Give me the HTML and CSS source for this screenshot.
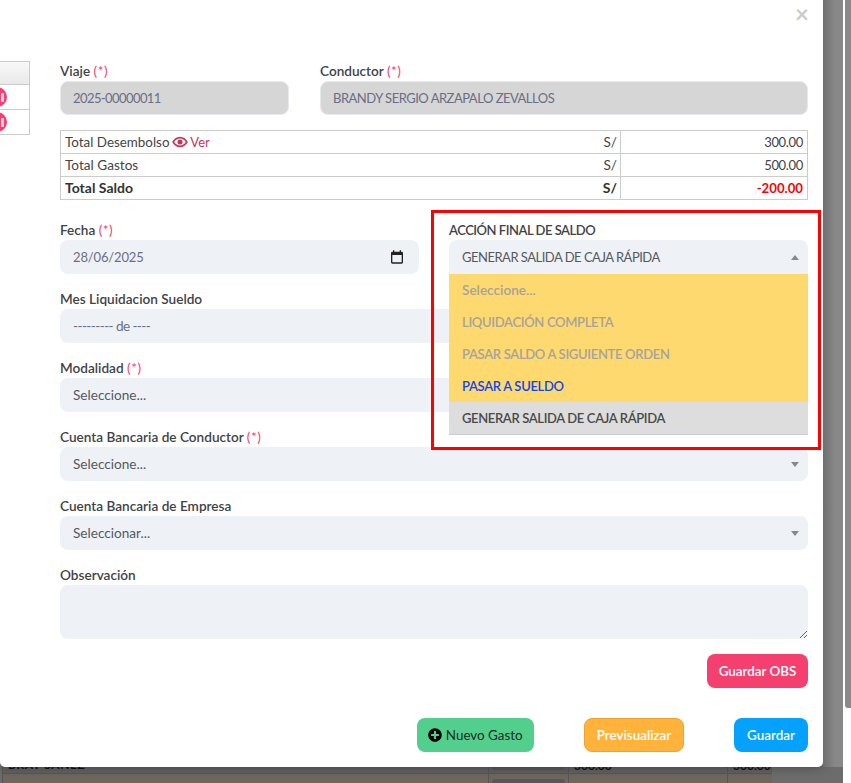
FILE: index.html
```html
<!DOCTYPE html>
<html lang="en">
<head>
    <meta charset="UTF-8">
    <meta name="viewport" content="width=device-width, initial-scale=1.0">
    <title>Liquidacion de Viaje</title>
    <link rel="stylesheet" href="styles.css">
</head>
<body>
    <div class="page">
        <div class="back-table">
            <div class="back-row back-row-gray">
                <div class="back-cell back-name">BRAY SANEZ</div>
                <div class="back-cell back-btn-cell"><span class="back-btn"></span></div>
                <div class="back-cell back-money">300.00</div>
                <div class="back-cell back-money">300.00</div>
            </div>
            <div class="back-row back-row-brown">
                <div class="back-cell"></div>
                <div class="back-cell back-btn-cell"><span class="back-btn"></span></div>
                <div class="back-cell"></div>
                <div class="back-cell"></div>
            </div>
        </div>

        <div class="modal">
            <span class="close">&times;</span>

            <div class="behind-table">
                <div class="behind-head"></div>
                <div class="behind-row"><span class="pill"></span></div>
                <div class="behind-row"><span class="pill"></span></div>
            </div>

            <div class="form">
                <div class="row row-top">
                    <div class="group">
                        <label>Viaje <span class="req">(*)</span></label>
                        <div class="field readonly digits">2025-00000011</div>
                    </div>
                    <div class="group">
                        <label>Conductor <span class="req">(*)</span></label>
                        <div class="field readonly caps">BRANDY SERGIO ARZAPALO ZEVALLOS</div>
                    </div>
                </div>

                <table class="totals">
                    <tr>
                        <td class="desembolso">Total Desembolso
                            <svg class="eye" viewBox="0 0 576 400"><path d="M288 10C165 10 60 90 6 200c54 110 159 190 282 190s228-80 282-190C516 90 411 10 288 10zm0 316c-84 0-160-48-208-126 48-78 124-126 208-126s160 48 208 126c-48 78-124 126-208 126z"/><circle cx="288" cy="200" r="92"/></svg>
                            <span class="ver">Ver</span>
                        </td>
                        <td class="cur">S/</td>
                        <td class="num">300.00</td>
                    </tr>
                    <tr>
                        <td>Total Gastos</td>
                        <td class="cur">S/</td>
                        <td class="num">500.00</td>
                    </tr>
                    <tr class="total">
                        <td>Total Saldo</td>
                        <td class="cur">S/</td>
                        <td class="num neg">-200.00</td>
                    </tr>
                </table>

                <div class="row row-half">
                    <div class="group">
                        <label>Fecha <span class="req">(*)</span></label>
                        <div class="field date">28/06/2025
                            <svg class="calendar" viewBox="0 0 24 24"><path d="M19 4h-1V2h-2v2H8V2H6v2H5a2 2 0 0 0-2 2v14a2 2 0 0 0 2 2h14a2 2 0 0 0 2-2V6a2 2 0 0 0-2-2zm0 16H5V9h14v11z"/></svg>
                        </div>
                    </div>
                    <div class="group">
                        <label class="label-caps">ACCIÓN FINAL DE SALDO</label>
                        <div class="field select open caps">GENERAR SALIDA DE CAJA RÁPIDA<span class="arrow up"></span></div>
                        <ul class="options">
                            <li class="muted first">Seleccione...</li>
                            <li class="muted">LIQUIDACIÓN COMPLETA</li>
                            <li class="muted">PASAR SALDO A SIGUIENTE ORDEN</li>
                            <li class="blue">PASAR A SUELDO</li>
                            <li class="current">GENERAR SALIDA DE CAJA RÁPIDA</li>
                        </ul>
                        <div class="red-box"></div>
                    </div>
                </div>

                <div class="group">
                    <label>Mes Liquidacion Sueldo</label>
                    <div class="field month">--------- de ----</div>
                </div>
                <div class="group">
                    <label>Modalidad <span class="req">(*)</span></label>
                    <div class="field select">Seleccione...<span class="arrow"></span></div>
                </div>
                <div class="group">
                    <label>Cuenta Bancaria de Conductor <span class="req">(*)</span></label>
                    <div class="field select">Seleccione...<span class="arrow"></span></div>
                </div>
                <div class="group">
                    <label>Cuenta Bancaria de Empresa</label>
                    <div class="field select">Seleccionar...<span class="arrow"></span></div>
                </div>
                <div class="group">
                    <label>Observación</label>
                    <textarea class="obs"></textarea>
                </div>

                <div class="obs-actions">
                    <button class="btn btn-pink">Guardar OBS</button>
                </div>

                <div class="actions">
                    <button class="btn btn-green">
                        <svg class="plus" viewBox="0 0 512 512"><path d="M256 8C119 8 8 119 8 256s111 248 248 248 248-111 248-248S393 8 256 8zm144 276a12 12 0 0 1-12 12h-92v92a12 12 0 0 1-12 12h-56a12 12 0 0 1-12-12v-92h-92a12 12 0 0 1-12-12v-56a12 12 0 0 1 12-12h92v-92a12 12 0 0 1 12-12h56a12 12 0 0 1 12 12v92h92a12 12 0 0 1 12 12z"/></svg>
                        Nuevo Gasto
                    </button>
                    <button class="btn btn-orange">Previsualizar</button>
                    <button class="btn btn-blue">Guardar</button>
                </div>
            </div>
        </div>

        <div class="gutter"></div>
        <div class="scrollbar">
            <div class="scroll-thumb"></div>
        </div>
    </div>
</body>
</html>
```

FILE: styles.css
```css
* {
    box-sizing: border-box;
}
html, body {
    margin: 0;
    height: 783px;
    overflow: hidden;
}
body {
    font-family: "Lato", "Noto Sans", sans-serif;
    font-size: 13.6px;
    color: #495057;
    background: #fff;
}
.page {
    position: relative;
    display: flex;
    height: 783px;
    background: #6c6c6c;
}

/* page behind the modal, only its last rows show */
.back-table {
    position: absolute;
    top: 745px;
    left: 2px;
    width: 770px;
}
.back-row {
    display: grid;
    grid-template-columns: 486px 80px 159px 45px;
}
.back-row-gray {
    height: 29px;
    background: #626262;
}
.back-row-brown {
    height: 12px;
    background: #6e675c;
}
.back-cell {
    border-left: 1px solid #565656;
    border-bottom: 1px solid #565656;
    font-size: 12px;
    font-weight: bold;
    color: #111;
    white-space: nowrap;
}
.back-name {
    padding: 12px 0 0 5px;
    letter-spacing: 0.6px;
}
.back-money {
    padding: 13px 0 0 5px;
}
.back-btn-cell {
    padding: 0 3px;
    background: #616161;
}
.back-row-brown .back-btn-cell {
    background: none;
    padding-top: 5px;
    overflow: hidden;
}
.back-btn {
    display: block;
    height: 25px;
    border-radius: 3px;
    background: #55575c;
}

.modal {
    position: relative;
    display: flex;
    width: 823px;
    height: 767px;
    padding: 61px 15px 0 0;
    background: #fff;
    border-radius: 0 0 5px 5px;
    box-shadow: 0 0 12px rgba(0, 0, 0, 0.35);
    flex-shrink: 0;
}
.close {
    position: absolute;
    top: -1px;
    right: 14px;
    font-size: 24px;
    font-weight: bold;
    color: #ccc;
}
.behind-table {
    width: 30px;
    height: 74px;
    margin-right: 30px;
    border: 1px solid #ccc;
    border-left: 0;
    flex-shrink: 0;
    overflow: hidden;
}
.behind-head {
    height: 22px;
    background: linear-gradient(#f8f8f8, #e9e9e9);
}
.behind-row {
    height: 25px;
    border-top: 1px solid #ccc;
    padding-top: 2px;
}
.pill {
    position: relative;
    display: block;
    width: 20px;
    height: 20px;
    margin-left: -13px;
    border-radius: 10px;
    background: #f5406f;
}
.pill::after {
    content: "";
    position: absolute;
    top: 6px;
    right: 3px;
    width: 3px;
    height: 9px;
    background: #fbd0dc;
}
.form {
    width: 748px;
}
.row {
    display: grid;
    column-gap: 30px;
}
.row-top {
    grid-template-columns: 229px 1fr;
    column-gap: 31px;
}
.row-half {
    grid-template-columns: 1fr 1fr;
}
.group {
    position: relative;
    margin-bottom: 15px;
}
label {
    display: block;
    height: 20px;
    line-height: 20px;
    font-weight: 600;
    color: #3f4347;
}
.label-caps {
    font-size: 13px;
    letter-spacing: -0.48px;
}
.req {
    font-weight: 400;
    color: #f5406f;
    letter-spacing: 0.5px;
}
.field {
    display: flex;
    align-items: center;
    justify-content: space-between;
    height: 34px;
    padding: 0 13px;
    background: #eef2f6;
    border-radius: 8px;
    color: #6a6e85;
}
.readonly {
    background: #d6d6d6;
    border: 1px solid #e6eaef;
    padding: 0 12px;
}
.caps {
    font-size: 13px;
    letter-spacing: -0.5px;
}
.digits {
    font-size: 13px;
    letter-spacing: -0.58px;
}
.date {
    font-size: 13px;
    letter-spacing: -0.15px;
    padding-right: 14px;
}
.month {
    letter-spacing: -0.6px;
}
.select {
    color: #55595e;
}
.open {
    border-radius: 8px 8px 0 0;
}
.arrow {
    width: 0;
    height: 0;
    border-left: 4px solid transparent;
    border-right: 4px solid transparent;
    border-top: 5px solid #888;
    margin-right: -4px;
}
.arrow.up {
    border-top: 0;
    border-bottom: 5px solid #888;
}
.calendar {
    width: 16px;
    height: 16px;
    fill: #222;
}
.totals {
    width: 100%;
    margin-bottom: 20px;
    border-collapse: collapse;
    table-layout: fixed;
    color: #444;
}
.totals td {
    height: 23px;
    padding: 0 4px 1px;
    border-top: 1px solid #ccc;
    border-bottom: 1px solid #ccc;
}
.totals td:first-child {
    border-left: 1px solid #ccc;
}
.totals td:last-child {
    border-right: 1px solid #ccc;
}
.totals .desembolso {
    font-size: 13.4px;
}
.totals .cur {
    width: 70px;
    text-align: right;
    border-right: 1px solid #ccc;
    padding-right: 3px;
}
.totals .num {
    width: 187px;
    text-align: right;
    font-size: 13px;
    letter-spacing: -0.33px;
}
.total td {
    font-size: 14px;
    font-weight: bold;
    color: #333;
}
.totals .neg {
    font-size: 13.2px;
    letter-spacing: 0;
    color: #f00;
}
.eye {
    width: 16px;
    height: 12px;
    margin: 0 -1px;
    fill: #c8355a;
    vertical-align: -1px;
}
.ver {
    font-size: 13px;
    color: #c8355a;
}
.options {
    position: absolute;
    top: 54px;
    left: 0;
    width: 100%;
    margin: 0;
    padding: 0;
    list-style: none;
    background: #fed970;
    border-bottom: 1px solid #c8ccd4;
    z-index: 3;
    font-size: 13px;
    font-weight: 600;
    letter-spacing: -0.31px;
}
.options li {
    height: 32px;
    line-height: 32px;
    padding: 0 13px;
}
.options .first {
    font-size: 13.6px;
    letter-spacing: 0;
}
.options .muted {
    color: #a5a39b;
}
.options .blue {
    color: #0d47f0;
}
.options .current {
    background: #ddd;
    color: #4a4a4a;
    letter-spacing: -0.36px;
}
.red-box {
    position: absolute;
    top: -10px;
    left: -18px;
    width: 390px;
    height: 240px;
    border: 3px solid #f00;
    z-index: 4;
}
.obs {
    display: block;
    width: 100%;
    height: 54px;
    background: #eef2f6;
    border: 0;
    border-radius: 8px;
}
.obs-actions {
    display: flex;
    justify-content: flex-end;
    height: 34px;
}
.actions {
    display: flex;
    justify-content: flex-end;
    gap: 50px;
    margin-top: 30px;
}
.btn {
    height: 34px;
    padding: 0;
    border: 1px solid transparent;
    border-radius: 8px;
    font-family: inherit;
    font-size: 13.4px;
    font-weight: 600;
    color: #fff;
    white-space: nowrap;
}
.btn-pink {
    width: 101px;
    background: #f5406f;
}
.btn-green {
    width: 117px;
    background: #52cf8d;
    color: #1c2b23;
    font-weight: 400;
}
.plus {
    width: 14px;
    height: 14px;
    vertical-align: -2px;
}
.btn-orange {
    width: 100px;
    background: #ffb33b;
    border-color: #eda32f;
}
.btn-blue {
    width: 74px;
    background: #05a2fd;
}
.gutter {
    position: relative;
    width: 20px;
    height: 767px;
    background: linear-gradient(90deg, #6e6e6e, #888 12px);
}
.scrollbar {
    position: relative;
    flex: 1;
    padding-left: 2px;
    background: #fdfdfd;
}
.scroll-thumb {
    width: 6px;
    height: 708px;
    background: #8a8a8a;
    border-radius: 0 0 0 3px;
}
```
